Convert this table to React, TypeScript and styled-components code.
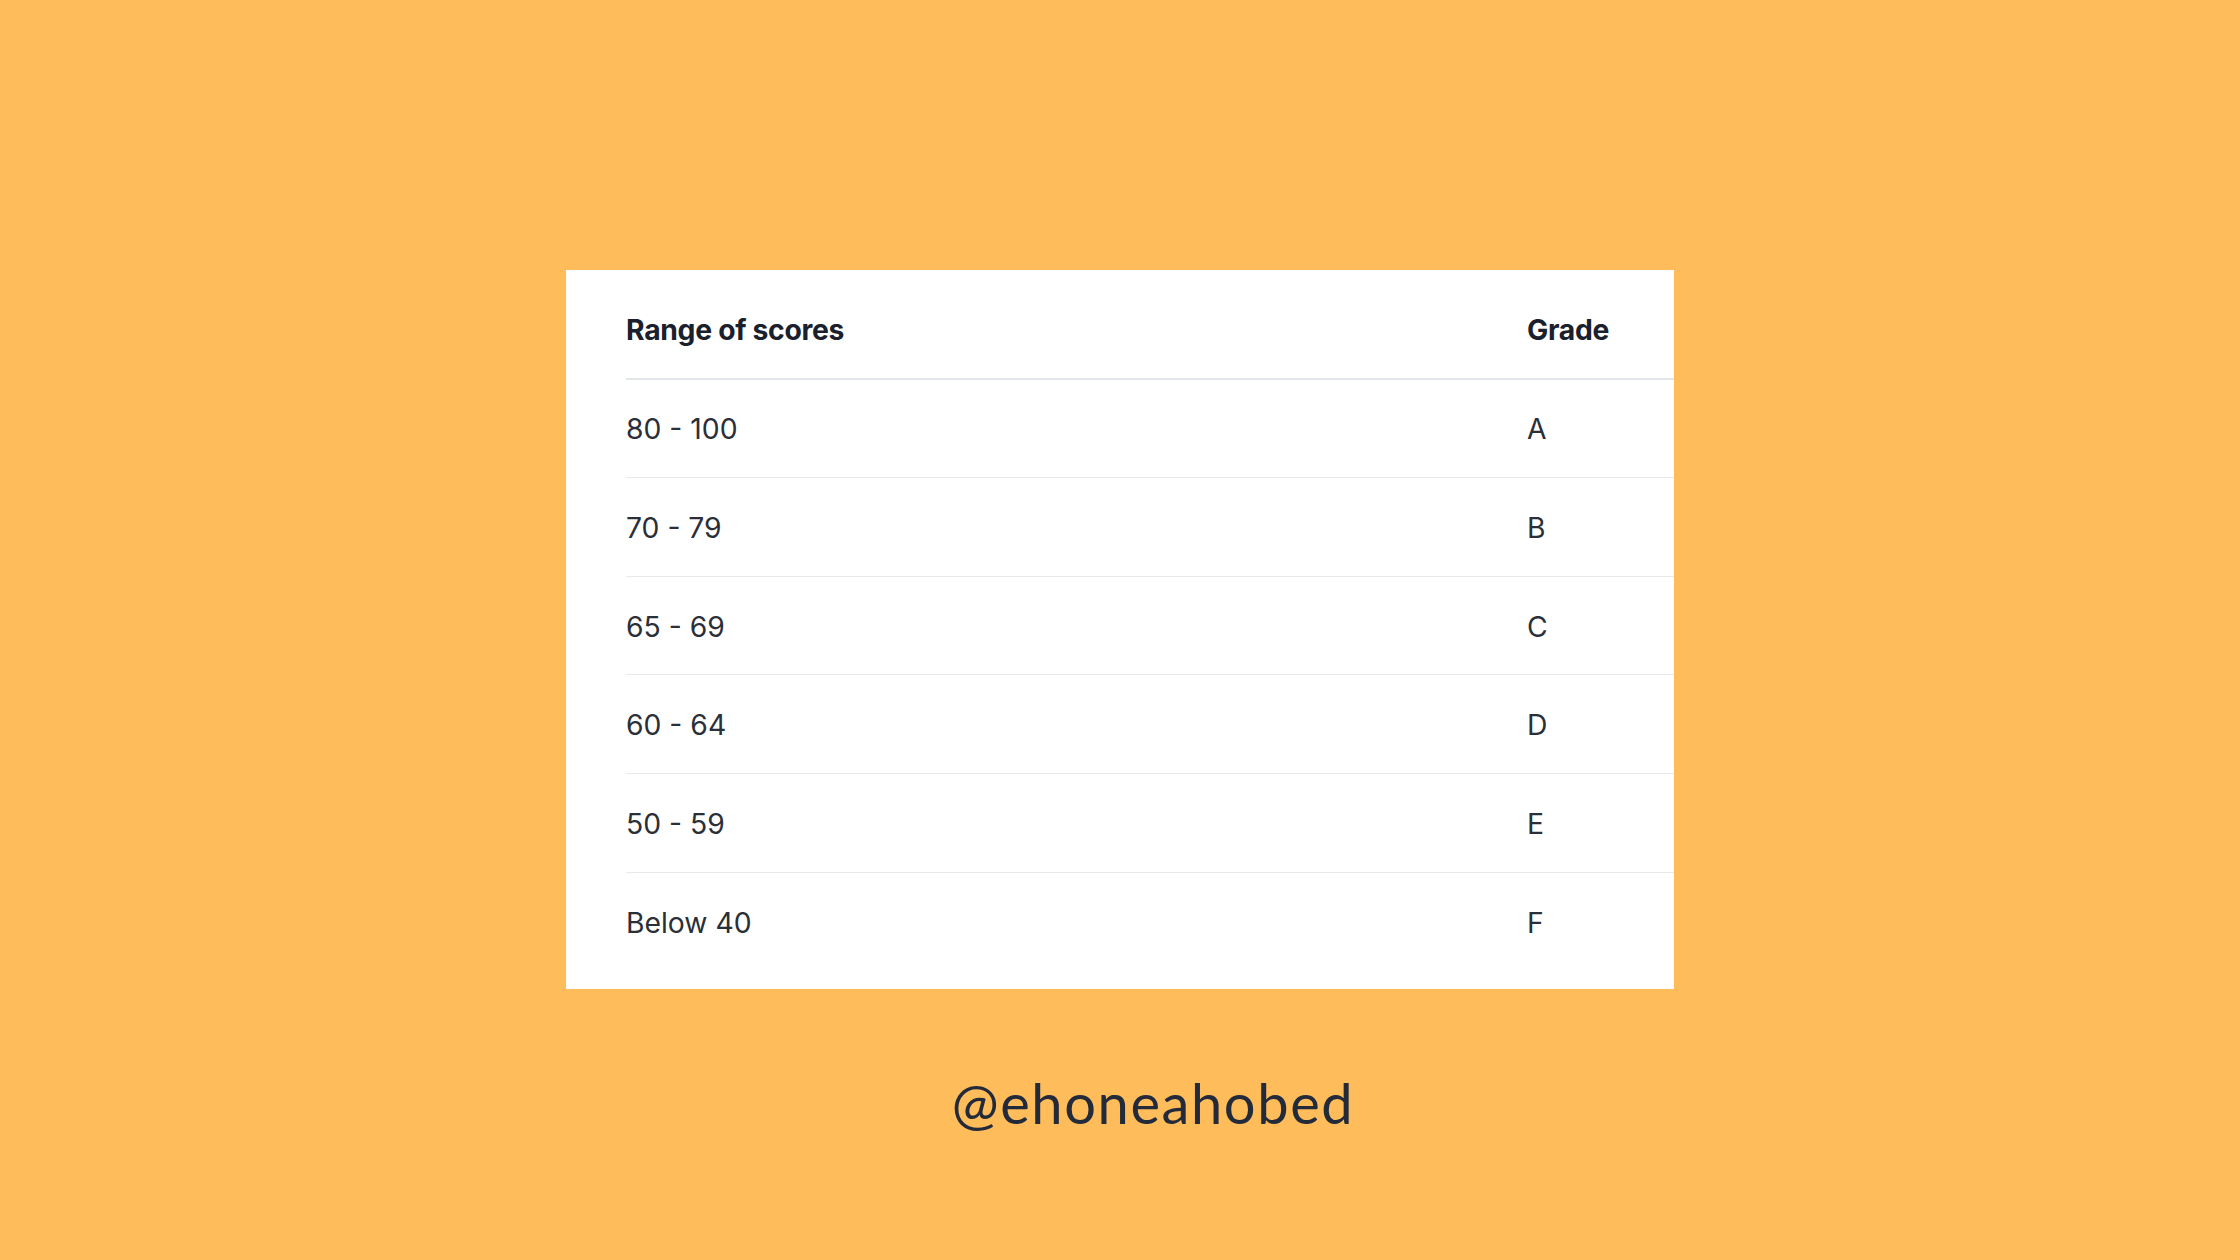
import styled, { createGlobalStyle } from "styled-components"

const GlobalStyle = createGlobalStyle`
    html, body {
        margin: 0;
        padding: 0;
        background: #FEBC5A;
    }
`

const grades = [
    { range: "80 - 100", grade: "A" },
    { range: "70 - 79", grade: "B" },
    { range: "65 - 69", grade: "C" },
    { range: "60 - 64", grade: "D" },
    { range: "50 - 59", grade: "E" },
    { range: "Below 40", grade: "F" },
]

export default function App() {
    return <Page>
        <GlobalStyle />
        <Card>
            <Table>
                <Row $header>
                    <HeadCell>Range of scores</HeadCell>
                    <HeadCell>Grade</HeadCell>
                </Row>
                {grades.map((g, i) => (
                    <Row key={g.grade} $last={i === grades.length - 1}>
                        <Cell>{g.range}</Cell>
                        <Cell>{g.grade}</Cell>
                    </Row>
                ))}
            </Table>
        </Card>
        <Handle>@ehoneahobed</Handle>
    </Page>
}

const Page = styled.div`
    width: 2240px;
    height: 1260px;
    background: #FEBC5A;
    display: flex;
    flex-direction: column;
    align-items: center;
    padding-top: 270px;
    box-sizing: border-box;
    font-family: Inter, "Liberation Sans", sans-serif;
`

const Card = styled.div`
    width: 1108px;
    height: 719px;
    background: #ffffff;
    padding: 11px 0 0 60px;
    box-sizing: border-box;
    overflow: hidden;
`

const Table = styled.div`
    display: flex;
    flex-direction: column;
`

const Row = styled.div<{ $header?: boolean; $last?: boolean }>`
    display: grid;
    grid-template-columns: 901px 1fr;
    align-items: center;
    height: 98.6px;
    padding-top: 2px;
    border-bottom: ${p => p.$last ? "none" : p.$header ? "2px solid #e2e6ea" : "1.5px solid #e6e8ea"};
    box-sizing: border-box;
`

const HeadCell = styled.span`
    font-size: 28.3px;
    font-weight: 700;
    color: #1a202c;
    letter-spacing: -0.3px;
`

const Cell = styled.span`
    font-size: 28.3px;
    font-weight: 400;
    color: #2a2f38;
`

const Handle = styled.div`
    margin-top: 80px;
    padding-left: 66px;
    font-family: Lato, "Noto Sans", sans-serif;
    font-size: 56px;
    color: #232a3a;
    letter-spacing: 1.6px;
`
